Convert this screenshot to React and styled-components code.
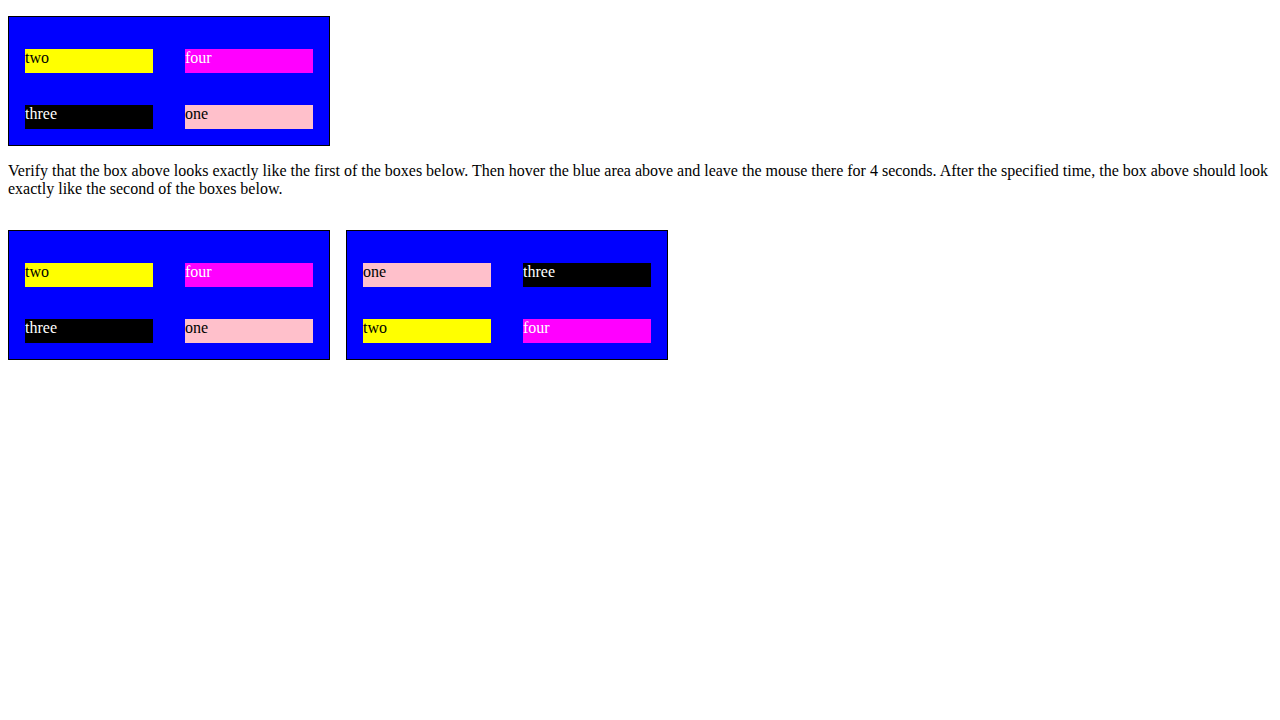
import styled, { createGlobalStyle } from 'styled-components';

const GlobalStyle = createGlobalStyle`
  body {
    margin: 8px;
    background: #fff;
    font-family: "Liberation Serif", "Times New Roman", serif;
    font-size: 16px;
    color: #000;
  }
`;

const Page = styled.div`
  display: flex;
  flex-direction: column;
  align-items: flex-start;
`;

const Box = styled.div`
  display: grid;
  grid-template-columns: 128px 128px;
  grid-auto-rows: 24px;
  column-gap: 32px;
  row-gap: 32px;
  width: 320px;
  height: 128px;
  box-sizing: content-box;
  padding: 0;
  border: 1px solid #000;
  background: #00f;
  align-content: start;
  padding-top: 32px;
  padding-left: 16px;
  box-sizing: border-box;
  width: 322px;
  height: 130px;
`;

const Item = styled.div`
  width: 128px;
  height: 24px;
  line-height: 18px;
  background: ${p => p.$bg};
  color: ${p => p.$fg};
  white-space: nowrap;
`;

const TopBox = styled(Box)`
  margin-top: 8px;
`;

const Note = styled.p`
  margin: 16px 0 32px;
  line-height: 18px;
`;

const Row = styled.div`
  display: flex;
  gap: 16px;
`;

const COLORS = {
  one: ['pink', '#000'],
  two: ['yellow', '#000'],
  three: ['#000', '#fff'],
  four: ['magenta', '#fff'],
};

function Cells({ order }) {
  return order.map(name => (
    <Item key={name} $bg={COLORS[name][0]} $fg={COLORS[name][1]}>{name}</Item>
  ));
}

const before = ['two', 'four', 'three', 'one'];
const after = ['one', 'three', 'two', 'four'];

export default function App() {
  return (
    <>
      <GlobalStyle />
      <Page>
        <TopBox><Cells order={before} /></TopBox>
        <Note>
          Verify that the box above looks exactly like the first of the boxes below. Then hover the blue area above and leave the mouse there for 4 seconds. After the specified time, the box above should look exactly like the second of the boxes below.
        </Note>
        <Row>
          <Box><Cells order={before} /></Box>
          <Box><Cells order={after} /></Box>
        </Row>
      </Page>
    </>
  );
}
